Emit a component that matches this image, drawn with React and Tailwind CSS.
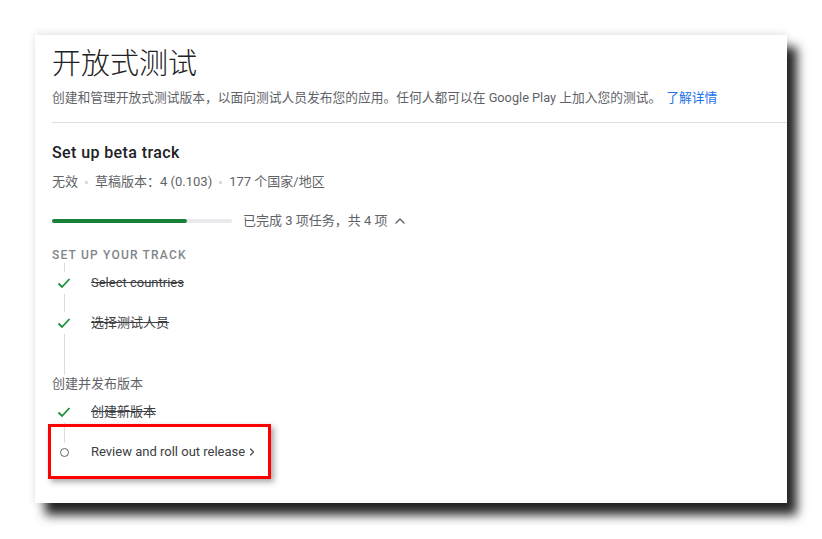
import React from "react";
import { ChevronUp, ChevronRight } from "lucide-react";

const font = "font-['Roboto','Noto_Sans_CJK_SC',sans-serif]";

const Check = () => (
  <svg width="14" height="12" viewBox="0 0 14 12" className="shrink-0">
    <polyline points="1.5,6.5 5,10 12.5,2" fill="none" stroke="#1e8e3e" strokeWidth="1.8" />
  </svg>
);

const Line = ({ show = true }) => (
  <div className={`w-px flex-1 ${show ? "bg-[#dadce0]" : ""}`}></div>
);

const Step = ({ done, label, top = true, bottom = true, h = "h-[40px]" }) => (
  <div className={`flex ${h}`}>
    <div className="w-[24px] flex flex-col items-center">
      <Line show={top} />
      <div className="py-[5px]">
        {done ? (
          <Check />
        ) : (
          <div className="w-[9px] h-[9px] rounded-full border border-[#5f6368]"></div>
        )}
      </div>
      <Line show={bottom} />
    </div>
    <div className="flex items-center pl-[15px]">
      {done ? (
        <span className="text-[13px] text-[#3c4043] line-through">{label}</span>
      ) : (
        <span className="flex items-center text-[13px] text-[#3c4043]">
          {label}
          <ChevronRight size={12} strokeWidth={2.2} className="ml-[1px]" />
        </span>
      )}
    </div>
  </div>
);

export default function App() {
  return (
    <div className={`w-[822px] h-[539px] bg-white overflow-hidden pt-[35px] pl-[35px] ${font}`}>
      <div className="relative w-[752px] h-[468px] bg-white shadow-[0_-1px_8px_rgba(0,0,0,0.12),10px_12px_10px_rgba(0,0,0,0.85)]">
        {/* header */}
        <div className="pl-[17px] pt-[11px]">
          <h1 className="text-[29px] leading-[36px] text-[#202124] font-light">开放式测试</h1>
          <p className="mt-[6px] text-[12.75px] leading-[20px] text-[#5f6368]">
            创建和管理开放式测试版本，以面向测试人员发布您的应用。任何人都可以在 Google Play 上加入您的测试。
            <a className="ml-[5px] text-[#1a73e8]">了解详情</a>
          </p>
          <div className="mt-[14px] border-b border-[#dadce0]"></div>
        </div>

        {/* track */}
        <div className="pl-[17px] pt-[18px]">
          <h2 className="text-[16px] leading-[24px] font-medium tracking-[0.4px] text-[#202124]">Set up beta track</h2>
          <div className="mt-[7px] flex items-center text-[13px] leading-[20px] text-[#5f6368]">
            <span>无效</span>
            <span className="mx-[7px] w-[3px] h-[3px] bg-[#dadce0]"></span>
            <span>草稿版本：4 (0.103)</span>
            <span className="mx-[7px] w-[3px] h-[3px] bg-[#dadce0]"></span>
            <span>177 个国家/地区</span>
          </div>

          <div className="mt-[19px] h-[20px] flex items-center">
            <div className="w-[180px] h-[4px] rounded-full bg-[#e8eaed]">
              <div className="w-[135px] h-[4px] rounded-full bg-[#188038]"></div>
            </div>
            <span className="ml-[11px] text-[13px] text-[#5f6368]">已完成 3 项任务，共 4 项</span>
            <ChevronUp size={16} strokeWidth={2} className="ml-[4px] text-[#5f6368]" />
          </div>

          <div className="mt-[16px] text-[12px] leading-[16px] font-medium tracking-[1.2px] text-[#80868b]">
            SET UP YOUR TRACK
          </div>

          <Step done label="Select countries" />
          <Step done label="选择测试人员" />
          <div className="flex h-[32px]">
            <div className="w-[24px] flex flex-col items-center">
              <Line />
            </div>
          </div>
          <div className="text-[13px] leading-[17px] text-[#5f6368]">创建并发布版本</div>
          <Step done label="创建新版本" top={false} />
          <Step label="Review and roll out release" bottom={false} />
        </div>

        {/* annotation */}
        <div className="absolute left-[13px] top-[389px] w-[223px] h-[55px] border-[3px] border-[#ff0000] shadow-[3px_3px_6px_rgba(0,0,0,0.35)]"></div>
      </div>
    </div>
  );
}
